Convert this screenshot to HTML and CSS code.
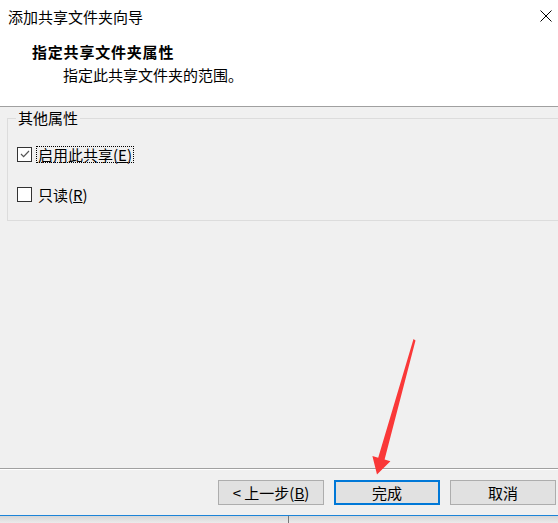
FILE: index.html
```html
<!DOCTYPE html>
<html lang="zh-CN">
  <head>
    <meta charset="UTF-8" />
    <title>添加共享文件夹向导</title>
    <link rel="stylesheet" href="styles.css">
  </head>
  <body>
    <div class="dialog">
      <div class="titlebar">
        <span class="title">添加共享文件夹向导</span>
        <svg class="close" width="12" height="12" viewBox="0 0 12 12">
          <path d="M0.5 0.5 L11.5 11.5 M11.5 0.5 L0.5 11.5" stroke="#000" stroke-width="1" fill="none" />
        </svg>
      </div>

      <div class="header">
        <div class="header-title">指定共享文件夹属性</div>
        <div class="header-sub">指定此共享文件夹的范围。</div>
      </div>

      <div class="content">
        <fieldset class="group">
          <legend>其他属性</legend>
          <label class="check-row">
            <span class="box">
              <svg width="12" height="12" viewBox="0 0 12 12">
                <path d="M2 6 L4.6 8.6 L10 3" stroke="#555" stroke-width="1.2" fill="none" />
              </svg>
            </span>
            <span class="focus">启用此共享(<u>E</u>)</span>
          </label>
          <label class="check-row">
            <span class="box"></span>
            <span class="text">只读(<u>R</u>)</span>
          </label>
        </fieldset>
      </div>

      <div class="footer">
        <button class="btn">&lt; 上一步(<u>B</u>)</button>
        <button class="btn primary">完成</button>
        <button class="btn">取消</button>
      </div>
    </div>

    <div class="behind">
      <div class="behind-left"></div>
      <div class="behind-right"></div>
    </div>

    <!-- annotation arrow pointing at the finish button -->
    <svg class="arrow" width="558" height="523" viewBox="0 0 558 523">
      <polygon points="413.5,339 415.5,340.5 384.6,459.4 390.4,461.2 377,474.5 372.4,456 378.2,457.8" fill="#fa3838" />
    </svg>
  </body>
</html>
```

FILE: styles.css
```css
body {
  font-family: "Noto Sans CJK SC", "Noto Sans", sans-serif;
  font-size: 15px;
  color: #000;
  margin: 0;
  padding: 0;
  width: 558px;
  height: 523px;
  overflow: hidden;
  position: relative;
  background: #f0f0f0;
}

.dialog {
  height: 515px;
  display: flex;
  flex-direction: column;
  background: #f0f0f0;
  border-bottom: 1px solid #1c84d8;
}

.titlebar {
  height: 32px;
  flex-shrink: 0;
  display: flex;
  align-items: center;
  justify-content: space-between;
  background: #fff;
  padding: 0 6px 0 8px;
}

.title {
  line-height: 20px;
  margin-top: 2px;
}

.close {
  display: block;
}

.header {
  height: 75px;
  flex-shrink: 0;
  box-sizing: border-box;
  background: #fff;
  border-bottom: 1px solid #a0a0a0;
  padding-top: 10px;
}

.header-title {
  font-weight: 700;
  line-height: 20px;
  letter-spacing: 0.8px;
  padding-left: 32px;
}

.header-sub {
  line-height: 20px;
  margin-top: 3px;
  padding-left: 63px;
}

.content {
  flex-grow: 1;
  overflow: hidden;
}

.group {
  margin: 1px 0 0 7px;
  width: 580px;
  padding: 0 0 14px 9px;
  border: 1px solid #dcdcdc;
  display: flex;
  flex-direction: column;
  gap: 16px;
}

.group legend {
  padding: 0 2px;
  margin-left: -1px;
  line-height: 20px;
}

.check-row {
  display: flex;
  align-items: center;
  height: 24px;
}

.check-row:first-of-type {
  margin-top: 14px;
}

.box {
  width: 13px;
  height: 13px;
  border: 1px solid #333;
  background: #fff;
  display: flex;
  align-items: center;
  justify-content: center;
  margin-right: 5px;
}

.focus {
  line-height: 15px;
  outline: 1px dotted #000;
  padding: 0 1px;
}

.text {
  padding: 0 1px;
}

.footer {
  height: 47px;
  flex-shrink: 0;
  box-sizing: border-box;
  border-top: 1px solid #a0a0a0;
  box-shadow: inset 0 1px 0 #fff;
  display: flex;
  justify-content: flex-end;
  gap: 10px;
  padding: 11px 2px 0 0;
}

.btn {
  font-family: inherit;
  font-size: 15px;
  color: #000;
  width: 106px;
  height: 25px;
  padding: 0;
  background: #e1e1e1;
  border: 1px solid #adadad;
  line-height: 20px;
}

.btn.primary {
  border: 2px solid #0078d7;
}

.behind {
  height: 7px;
  display: flex;
  background: linear-gradient(#d6d6d6, #ebebeb);
}

.behind-left {
  width: 288px;
  border-right: 1px solid #777;
}

.arrow {
  position: absolute;
  left: 0;
  top: 0;
  pointer-events: none;
}
```
